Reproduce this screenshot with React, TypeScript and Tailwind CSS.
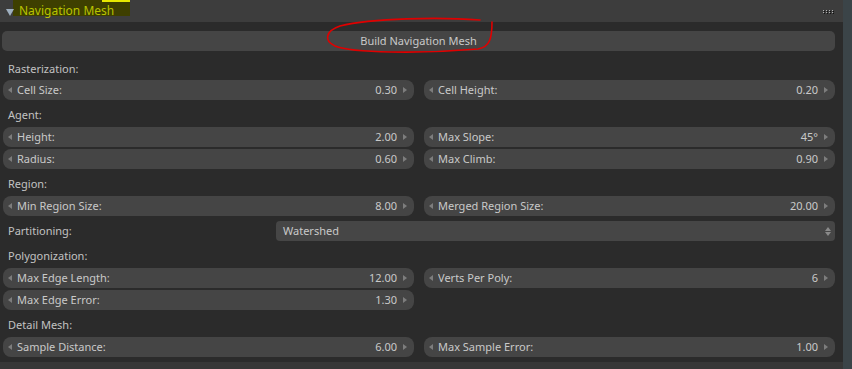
import React from 'react';

type Field = { label: string; value: string };

function LeftArrow() {
  return <span className="w-0 h-0 border-y-[3px] border-y-transparent border-r-[4px] border-r-[#7d7d7d]" />;
}

function RightArrow() {
  return <span className="w-0 h-0 border-y-[3px] border-y-transparent border-l-[4px] border-l-[#7d7d7d]" />;
}

function NumField({ label, value }: Field) {
  return (
    <div className="h-[20px] rounded-[8px] bg-[#454545] flex items-center pl-[5px] pr-[7px] text-[#c9c9c9]">
      <LeftArrow />
      <span className="ml-[5px] flex-1 truncate">{label}</span>
      <span className="mr-[6px]">{value}</span>
      <RightArrow />
    </div>
  );
}

function Row({ left, right }: { left: Field; right?: Field }) {
  return (
    <div className="grid grid-cols-2 gap-[10px]">
      <NumField {...left} />
      {right ? <NumField {...right} /> : <div />}
    </div>
  );
}

function Section({ title, first }: { title: string; first?: boolean }) {
  return (
    <div className={first ? 'h-[29px] pt-[11px] pl-[5px] leading-[14px] text-[#c2c2c2]' : 'h-[27px] pt-[8px] pl-[5px] leading-[14px] text-[#c2c2c2]'}>
      {title}
    </div>
  );
}

export default function App() {
  return (
    <div className="relative w-[852px] h-[369px] flex bg-[#3b4448] overflow-hidden text-[11px] font-['Noto_Sans','DejaVu_Sans',sans-serif]">
      <div className="w-[843px] flex flex-col bg-[#373737]">
        {/* panel header */}
        <div className="relative h-[22px] bg-[#3d3d3d] flex items-center">
          <div className="absolute left-[13px] top-0 w-[117px] h-[16px] bg-[#3e3f00]" />
          <div className="absolute left-[102px] top-0 w-[28px] h-[2px] bg-[#e8e800]" />
          <span className="relative ml-[6px] w-0 h-0 border-x-[4px] border-x-transparent border-t-[7px] border-t-[#9fb0c0] mt-[2px]" />
          <span className="relative ml-[5px] text-[12px] text-[#b9c300]">Navigation Mesh</span>
          <div className="ml-auto mr-[10px] grid grid-cols-4 gap-x-[2px] gap-y-[1px]">
            {Array.from({ length: 8 }).map((_, i) => (
              <span key={i} className="w-[1px] h-[1px] bg-[#b0b0b0] shadow-[1px_1px_0_#111]" />
            ))}
          </div>
        </div>

        {/* panel body */}
        <div className="h-[340px] bg-[#2b2b2b] pl-[3px] pr-[8px] pt-[9px] flex flex-col">
          <div className="-ml-[1px] h-[20px] rounded-[5px] bg-[#454545] flex items-center justify-center text-[#c9c9c9]">
            Build Navigation Mesh
          </div>

          <Section title="Rasterization:" first />
          <Row left={{ label: 'Cell Size:', value: '0.30' }} right={{ label: 'Cell Height:', value: '0.20' }} />

          <Section title="Agent:" />
          <div className="flex flex-col gap-[2px]">
            <Row left={{ label: 'Height:', value: '2.00' }} right={{ label: 'Max Slope:', value: '45°' }} />
            <Row left={{ label: 'Radius:', value: '0.60' }} right={{ label: 'Max Climb:', value: '0.90' }} />
          </div>

          <Section title="Region:" />
          <Row left={{ label: 'Min Region Size:', value: '8.00' }} right={{ label: 'Merged Region Size:', value: '20.00' }} />

          <div className="mt-[5px] h-[20px] flex items-center">
            <span className="w-[273px] pl-[5px] text-[#c2c2c2]">Partitioning:</span>
            <div className="flex-1 h-[20px] rounded-[4px] bg-[#464646] flex items-center pl-[7px] pr-[4px] text-[#c9c9c9]">
              <span className="flex-1">Watershed</span>
              <span className="flex flex-col gap-[1px]">
                <span className="w-0 h-0 border-x-[3px] border-x-transparent border-b-[4px] border-b-[#8a8a8a]" />
                <span className="w-0 h-0 border-x-[3px] border-x-transparent border-t-[4px] border-t-[#8a8a8a]" />
              </span>
            </div>
          </div>

          <Section title="Polygonization:" />
          <div className="flex flex-col gap-[2px]">
            <Row left={{ label: 'Max Edge Length:', value: '12.00' }} right={{ label: 'Verts Per Poly:', value: '6' }} />
            <Row left={{ label: 'Max Edge Error:', value: '1.30' }} />
          </div>

          <Section title="Detail Mesh:" />
          <Row left={{ label: 'Sample Distance:', value: '6.00' }} right={{ label: 'Max Sample Error:', value: '1.00' }} />
        </div>
      </div>

      {/* hand-drawn annotation */}
      <svg className="absolute left-0 top-0 pointer-events-none" width="852" height="369">
        <path
          d="M 480 20 C 440 17, 372 18, 340 26 C 325 31, 324 41, 335 46 C 352 53, 420 54, 478 49 C 490 47, 492 38, 492 22"
          fill="none"
          stroke="#e00000"
          strokeWidth="1.6"
          strokeLinecap="round"
        />
      </svg>
    </div>
  );
}
